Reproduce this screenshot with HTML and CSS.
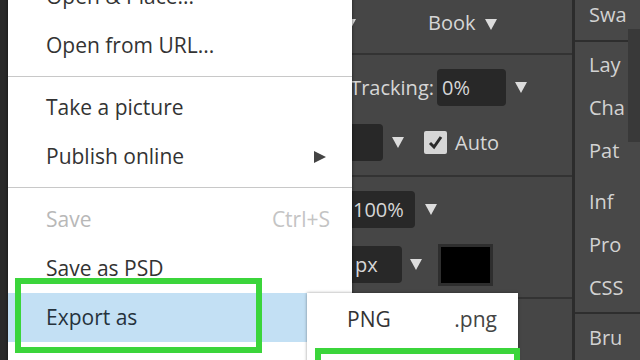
FILE: index.html
```html
<!DOCTYPE html>
<html lang="en">
<head>
    <meta charset="UTF-8">
    <meta name="viewport" content="width=device-width, initial-scale=1.0">
    <title>File menu</title>
    <link rel="stylesheet" href="styles.css">
</head>
<body>
    <div class="app">
        <div class="toolbar"></div>

        <div class="options">
            <div class="section section-top">
                <div class="row">
                    <div class="family">Open Sans <span class="caret"></span></div>
                    <div class="font-style">Book <span class="caret"></span></div>
                </div>
            </div>
            <div class="section">
                <div class="row">
                    <span class="tracking-label">Tracking:</span>
                    <span class="input tracking-input">0%</span>
                    <span class="caret caret-tracking"></span>
                </div>
                <div class="row row-leading">
                    <span class="input leading-input"></span>
                    <span class="caret caret-leading"></span>
                    <span class="checkbox">
                        <svg width="17" height="17" viewBox="0 0 17 17"><path d="M3 9l4 4 7-10" fill="none" stroke="#2b2b2b" stroke-width="3"/></svg>
                    </span>
                    <span class="auto-label">Auto</span>
                </div>
            </div>
            <div class="section">
                <div class="row row-indent">
                    <span class="input scale-input">100%</span>
                    <span class="caret caret-scale"></span>
                </div>
                <div class="row row-indent">
                    <span class="input unit-input">px</span>
                    <span class="caret caret-unit"></span>
                    <span class="swatch"></span>
                </div>
            </div>
        </div>

        <div class="dock">
            <div class="dock-group dock-first">
                <div class="dock-item dock-short">Swa</div>
            </div>
            <div class="dock-group dock-plain">
                <div class="dock-item">Lay</div>
                <div class="dock-item">Cha</div>
                <div class="dock-item">Pat</div>
            </div>
            <div class="dock-group dock-mid">
                <div class="dock-item">Inf</div>
                <div class="dock-item">Pro</div>
                <div class="dock-item">CSS</div>
            </div>
            <div class="dock-group dock-last">
                <div class="dock-item">Bru</div>
            </div>
            <div class="dock-thumb"></div>
        </div>

        <div class="menu">
            <div class="menu-item">Open &amp; Place...</div>
            <div class="menu-item">Open from URL...</div>
            <div class="menu-sep"></div>
            <div class="menu-item">Take a picture</div>
            <div class="menu-item">Publish online <span class="arrow"></span></div>
            <div class="menu-sep menu-sep-wide"></div>
            <div class="menu-item disabled">Save <span class="shortcut">Ctrl+S</span></div>
            <div class="menu-item">Save as PSD</div>
            <div class="menu-item active">Export as</div>
            <div class="menu-item menu-below">Print...</div>
        </div>

        <div class="submenu">
            <div class="menu-item sub-item">PNG <span class="ext">.png</span></div>
            <div class="menu-item sub-item">JPG <span class="ext">.jpg</span></div>
        </div>

        <div class="mark mark-export"></div>
        <div class="mark mark-png"></div>
    </div>
</body>
</html>
```

FILE: styles.css
```css
body {
    margin: 0;
    background: #2b2b2b;
    font-family: "Open Sans", "Noto Sans", sans-serif;
}
.app {
    position: relative;
    display: flex;
    width: 640px;
    height: 360px;
    overflow: hidden;
}
.toolbar {
    width: 8px;
    background: #2a2a2a;
}
.options {
    width: 564px;
    background: #464646;
    border-right: 3px solid #2c2c2c;
    color: #d6d6d6;
    font-size: 20px;
}
.section {
    padding: 5px 0;
    height: 110px;
    border-bottom: 2px solid #333;
}
.section-top {
    padding: 0 0 8px;
    height: 45px;
}
.row {
    display: flex;
    align-items: center;
    height: 55px;
}
.section-top .row {
    height: 45px;
}
.caret {
    display: inline-block;
    width: 0;
    height: 0;
    border-left: 6px solid transparent;
    border-right: 6px solid transparent;
    border-top: 11px solid #dcdcdc;
}
.family {
    width: 348px;
    text-align: right;
}
.font-style {
    margin-left: 72px;
}
.font-style .caret {
    margin-left: 4px;
}
.input {
    box-sizing: border-box;
    height: 37px;
    line-height: 37px;
    background: #282828;
    border-radius: 4px;
    padding-left: 5px;
}
.tracking-label {
    width: 426px;
    text-align: right;
}
.tracking-input {
    margin-left: 3px;
    width: 69px;
}
.caret-tracking {
    margin-left: 9px;
}
.row-leading {
    padding-left: 315px;
}
.leading-input {
    width: 60px;
}
.caret-leading {
    margin-left: 9px;
}
.checkbox {
    display: flex;
    align-items: center;
    justify-content: center;
    width: 23px;
    height: 23px;
    margin-left: 20px;
    background: #d6d6d6;
    border-radius: 2px;
}
.auto-label {
    margin-left: 8px;
}
.row-indent {
    padding-left: 337px;
}
.scale-input {
    width: 70px;
    padding-left: 8px;
}
.caret-scale {
    margin-left: 10px;
}
.unit-input {
    width: 57px;
    padding-left: 10px;
}
.caret-unit {
    margin-left: 8px;
}
.swatch {
    box-sizing: border-box;
    width: 55px;
    height: 42px;
    margin-left: 16px;
    background: #000;
    border: 3px solid #2e2e2e;
}
.dock {
    position: relative;
    flex: 1;
    background: #484848;
    color: #d2d2d2;
    font-size: 20px;
}
.dock-group {
    padding-left: 14px;
}
.dock-item {
    height: 43px;
    line-height: 43px;
}
.dock-first {
    height: 40px;
    border-bottom: 2px solid #2e2e2e;
}
.dock-short {
    height: 30px;
    line-height: 30px;
}
.dock-plain {
    padding-top: 1px;
}
.dock-mid {
    padding-top: 8px;
    padding-bottom: 3px;
    border-bottom: 2px solid #2e2e2e;
}
.dock-last {
    padding-top: 2px;
}
.dock-thumb {
    position: absolute;
    right: 0;
    top: 29px;
    width: 12px;
    height: 113px;
    background: #393939;
}
.menu {
    position: absolute;
    left: 8px;
    top: -28px;
    width: 344px;
    background: #fff;
    color: #333;
    font-size: 21px;
    box-shadow: 0 0 3px rgba(0,0,0,0.6);
}
.menu-item {
    display: flex;
    align-items: center;
    justify-content: space-between;
    height: 49px;
    line-height: 49px;
    padding: 0 22px 0 38px;
    white-space: nowrap;
}
.menu-item.disabled {
    color: #b8b8b8;
}
.menu-item.active {
    background: #c3e0f4;
    color: #26323c;
}
.menu-below {
    padding-top: 5px;
}
.shortcut {
    color: #c4c4c4;
}
.arrow {
    width: 0;
    height: 0;
    margin-right: 4px;
    border-top: 6px solid transparent;
    border-bottom: 6px solid transparent;
    border-left: 12px solid #444;
}
.menu-sep {
    height: 13px;
    background: linear-gradient(#c8c8c8, #c8c8c8) 0 6px / 100% 1px no-repeat;
}
.menu-sep-wide {
    height: 14px;
}
.submenu {
    position: absolute;
    left: 307px;
    top: 293px;
    width: 211px;
    height: 100px;
    background: #fff;
    color: #333;
    font-size: 21px;
    box-shadow: 0 0 3px rgba(0,0,0,0.4);
}
.sub-item {
    padding: 2px 21px 0 40px;
}
.ext {
    color: #444;
}
.mark {
    position: absolute;
    box-sizing: border-box;
    border: 6px solid #3bd53b;
}
.mark-export {
    left: 15px;
    top: 278px;
    width: 247px;
    height: 75px;
}
.mark-png {
    left: 315px;
    top: 348px;
    width: 205px;
    height: 40px;
}
```
